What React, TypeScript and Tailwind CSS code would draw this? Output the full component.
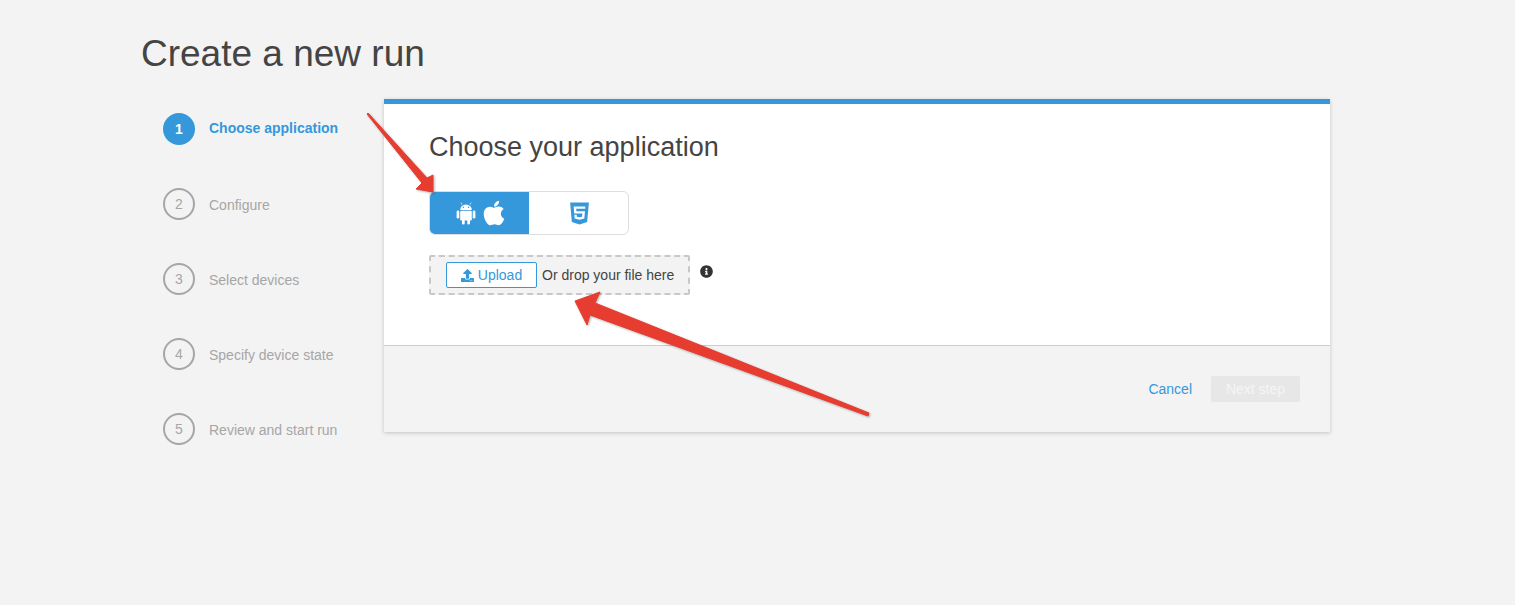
import { FaApple, FaHtml5, FaUpload, FaInfoCircle } from 'react-icons/fa'

const steps = ['Choose application', 'Configure', 'Select devices', 'Specify device state', 'Review and start run']

const AndroidIcon = () => (
  <svg width="20" height="23" viewBox="0 0 20 23" fill="currentColor">
    <path d="M4.2 8a5.8 5.6 0 0 1 11.6 0Z" />
    <path d="M6 2.6 4.9.6M14 2.6 15.1.6" stroke="currentColor" strokeWidth="0.7" />
    <circle cx="7.4" cy="5.2" r="0.7" fill="#3498db" />
    <circle cx="12.6" cy="5.2" r="0.7" fill="#3498db" />
    <rect x="4.2" y="8.8" width="11.6" height="9.6" rx="1.2" />
    <rect x="0.6" y="8.6" width="2.7" height="8" rx="1.35" />
    <rect x="16.7" y="8.6" width="2.7" height="8" rx="1.35" />
    <rect x="6" y="16" width="2.7" height="6.6" rx="1.35" />
    <rect x="11.3" y="16" width="2.7" height="6.6" rx="1.35" />
  </svg>
)

export default function App() {
  return (
    <div className="relative min-h-[605px] overflow-hidden bg-[#f3f3f3] font-['Liberation_Sans',Arial,sans-serif] text-[#444]">
      <div className="pl-[141px] w-[1330px]">
        <h1 className="pt-[33px] text-[37px] leading-[42px] text-[#444]">Create a new run</h1>

        <div className="mt-[24px] flex items-start">
          {/* steps */}
          <div className="w-[243px] shrink-0 pl-[22px] pt-[14px]">
            {steps.map((step, i) => (
              <div key={step} className="flex h-[75px] items-start">
                <div
                  className={
                    i === 0
                      ? 'flex h-[32px] w-[32px] items-center justify-center rounded-full bg-[#3498db] text-sm font-bold text-white'
                      : 'flex h-[32px] w-[32px] items-center justify-center rounded-full border-2 border-[#a6a6a6] text-sm text-[#a6a6a6]'
                  }
                >
                  {i + 1}
                </div>
                <div
                  className={
                    i === 0
                      ? 'ml-[14px] text-sm leading-[30px] font-bold text-[#3498db]'
                      : 'ml-[14px] text-sm leading-[34px] text-[#a6a6a6]'
                  }
                >
                  {step}
                </div>
              </div>
            ))}
          </div>

          {/* card */}
          <div className="w-[946px] border-t-[5px] border-[#3498db] bg-white shadow-[0_1px_4px_rgba(0,0,0,0.2)]">
            <div className="h-[241px] pl-[45px] pt-[27px]">
              <h2 className="text-[27px] leading-[32px] text-[#444]">Choose your application</h2>

              <div className="mt-[28px] flex h-[44px] w-[200px] overflow-hidden rounded-[6px] border border-[#ddd]">
                <div className="flex w-[99px] items-center justify-center gap-[4px] bg-[#3498db] pl-[4px] text-white">
                  <AndroidIcon />
                  <FaApple className="text-[28px]" />
                </div>
                <div className="flex flex-1 items-center justify-center pl-[1px] text-[#3498db]">
                  <FaHtml5 className="text-[25px]" />
                </div>
              </div>

              <div className="mt-[20px] flex items-start">
                <div className="flex h-[40px] w-[261px] items-center rounded-[2px] border-2 border-dashed border-[#c8c8c8] bg-[#f3f3f3] pl-[15px]">
                  <div className="flex h-[26px] w-[91px] items-center justify-center gap-[4px] rounded-[2px] border border-[#3498db] bg-white text-sm text-[#3498db]">
                    <FaUpload className="text-[13px]" />
                    Upload
                  </div>
                  <span className="ml-[5px] text-sm text-[#444]">Or drop your file here</span>
                </div>
                <FaInfoCircle className="ml-[10px] mt-[10px] text-[13px] text-[#333]" />
              </div>
            </div>

            <div className="flex h-[87px] items-start justify-end border-t border-[#ccc] bg-[#f3f3f3] pr-[30px] pt-[30px]">
              <span className="mt-[3px] text-sm text-[#3498db]">Cancel</span>
              <div className="ml-[19px] flex h-[26px] w-[89px] items-center justify-center rounded-[2px] bg-[#e7e7e7] text-sm text-[#f5f5f5]">
                Next step
              </div>
            </div>
          </div>
        </div>
      </div>

      {/* annotation arrows */}
      <svg
        className="pointer-events-none absolute left-0 top-0 drop-shadow-[1px_1px_1px_rgba(0,0,0,0.3)]"
        width="1515"
        height="605"
      >
        <g fill="#e73c30" stroke="#e73c30" strokeWidth="1" strokeLinejoin="round">
          <path d="M368 113 L427 178 L433 175 L433 192 L416 189 L422 183 L367 114 Z" />
          <path d="M575 301 L600 292 L595 303 L869 413 L868 416 L590 315 L587 325 Z" />
        </g>
      </svg>
    </div>
  )
}
